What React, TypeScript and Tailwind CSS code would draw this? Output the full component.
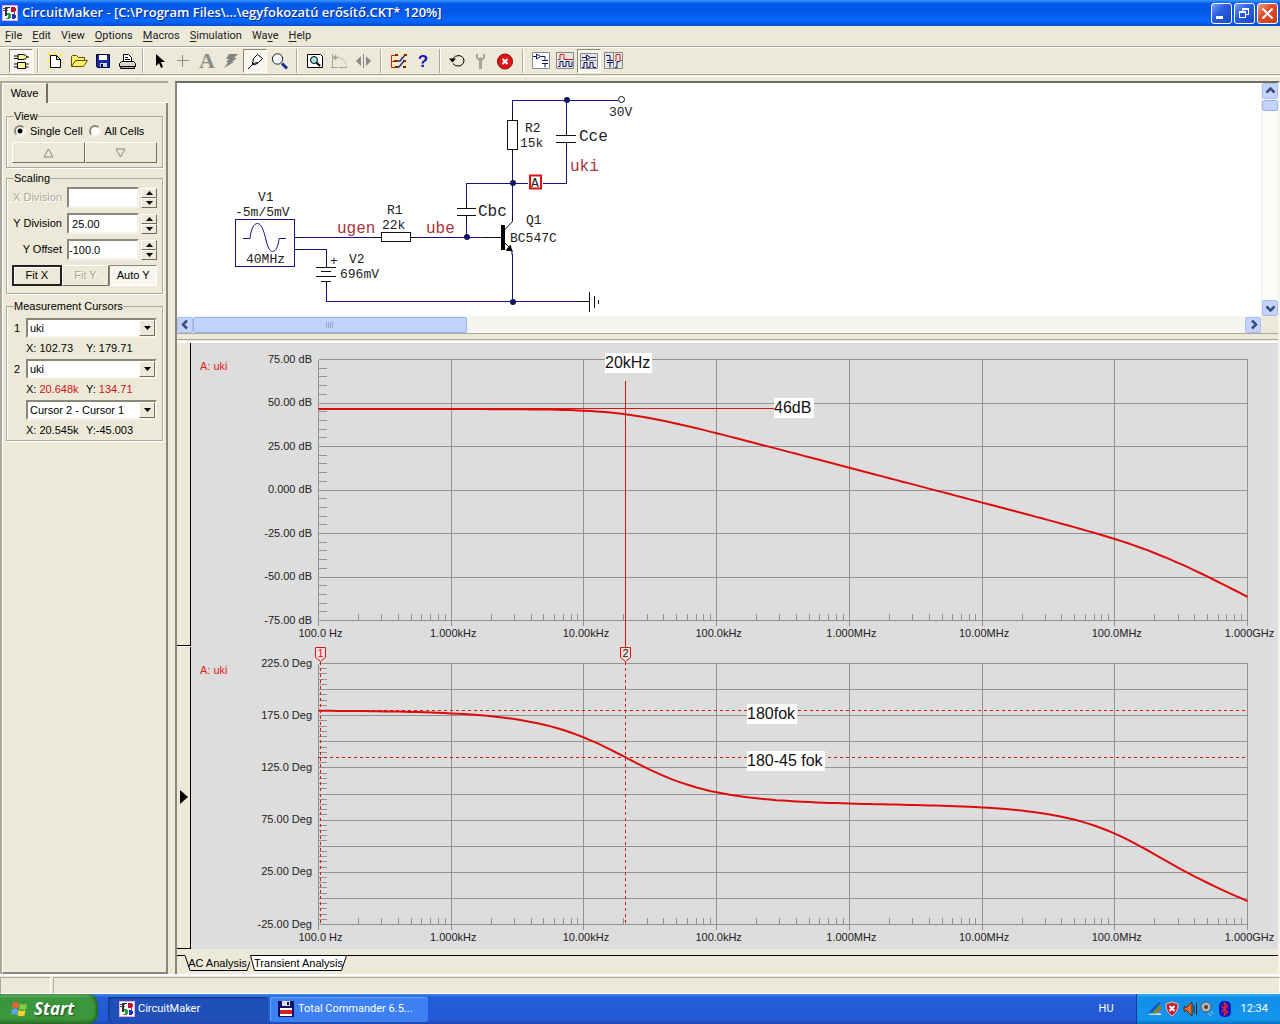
import { useState } from 'react'
import type { ReactNode } from 'react'
import clsx from 'clsx'

const raised = 'bg-[#ece9d8] border border-t-white border-l-white border-r-[#716f64] border-b-[#716f64]'
const sunken = 'bg-white border-2 border-t-[#8a8778] border-l-[#8a8778] border-r-[#f6f4ea] border-b-[#f6f4ea]'
const dither = 'bg-[#f6f5ee] border border-t-[#8a8778] border-l-[#8a8778] border-r-white border-b-white'

/* ---------- icons ---------- */

function AppIcon() {
  return (
    <svg viewBox="0 0 16 16" className="h-4 w-4 shrink-0" shapeRendering="crispEdges" aria-hidden="true">
      <rect width="16" height="16" fill="#f0a8ec" />
      <rect x="1" y="1" width="14" height="14" fill="#fff" />
      <path d="M1 3h5M1 5h5M4 8h3M12 7v3" stroke="#555" fill="none" />
      <path d="M3 2h5v1H5v8H3z" fill="#333" />
      <path d="M9 2h4v1h1v3h-1v1H9z" fill="#c01030" />
      <path d="M5 8h3v1h1v4H8v1H4v-1h2v-3H5z" fill="#2a9a4a" />
      <path d="M10 9h3v1h1v3h-1v1h-3z" fill="#2030b0" />
    </svg>
  )
}

const toolIcons: Record<string, ReactNode> = {
  Parts: (
    <g stroke="#000" fill="#fff59a">
      <path d="M9 5.500h5q3 0 4 2.500q-1 2.500-4 2.500H9zM5 7h4M5 9.500h4M18 8h2" />
      <path d="M8.500 13.500h8v6h-8zM5 15h3.500M5 18h3.500M16.500 15h3M16.500 18h3" />
    </g>
  ),
  New: (
    <g>
      <path d="M5 4l3 3M19 5l-2 3M4 12h4M19 15l-3-2M6 20l2-3M12 3v4" stroke="#ffee30" strokeWidth="2" />
      <path d="M7.500 6.500h6l4 4v8h-10zM13.500 6.500v4h4" fill="#fff" stroke="#000" />
    </g>
  ),
  Open: (
    <g stroke="#5a5200" fill="#fff06a">
      <path d="M4.500 17.500v-10l1-1h4l2 2h6v3" />
      <path d="M4.500 17.500l4-6h12l-4 6z" />
    </g>
  ),
  Save: (
    <g>
      <path d="M5.500 5.500h13v13h-12l-1-1z" fill="#1a2aa0" stroke="#000040" />
      <path d="M8 6h8v5H8z" fill="#fff" />
      <path d="M9 14h7v4H9z" fill="#c8d4f0" />
      <path d="M10 15h2v3h-2z" fill="#000040" />
    </g>
  ),
  Print: (
    <g stroke="#000" fill="#fff">
      <path d="M8.500 12.500v-7h5l3 3v4z" />
      <path d="M10 8.500h3M10 10.500h5" />
      <path d="M6.500 12.500h12l2 2v3h-16v-3z" fill="#d8d8c8" />
      <path d="M5.500 17.500h14v2h-14z" fill="#aaa" />
    </g>
  ),
  Select: <path d="M9 5v12l3-3 2 5 2-1-2-5h4z" fill="#000" />,
  Wire: <path d="M11.500 6v12M6 11.500h12" stroke="#8c8c86" fill="none" />,
  Text: (
    <text x="12" y="19" textAnchor="middle" fontSize="22" fontWeight="bold" fill="#8c8c86" className="font-['Liberation_Serif',serif]">A</text>
  ),
  Delete: <path d="M10 5h9l-4 4h3l-5 4h2l-10 6 4-6H7l3-3H7z" fill="#85857f" />,
  Probe: (
    <g stroke="#000" fill="#fff">
      <path d="M5 20l5-5" />
      <path d="M9.500 14.500l1-5 4-4 5 4-4 4z" />
      <path d="M9 14l2 2 4-2" fill="none" />
    </g>
  ),
  Zoom: (
    <g>
      <circle cx="10.500" cy="10" r="5.200" fill="#f4fbff" stroke="#222" />
      <path d="M15 14.500l5 5" stroke="#1a2a9a" strokeWidth="3" />
    </g>
  ),
  Fit: (
    <g stroke="#000" fill="none">
      <path d="M4.500 5.500h13l2 2v11h-15z" fill="#fff" />
      <circle cx="11" cy="11" r="3.500" fill="#9fe0e0" />
      <path d="M13.500 13.500l3.500 3.500" strokeWidth="2" />
    </g>
  ),
  Rotate: (
    <g stroke="#a5a59d" fill="none">
      <path d="M5.500 5v13M4 18.500h7M5.500 8.500h6M12 18.500h8" />
      <path d="M11 8.500q7 1 8.500 9" strokeDasharray="2 1" />
      <path d="M9 6l-3 2.500 3 2.500z" fill="#a5a59d" />
    </g>
  ),
  Mirror: (
    <g fill="#8c8c86">
      <path d="M10 7v10l-5-5zM15 7v10l5-5z" />
      <path d="M12 5h1v14h-1z" />
    </g>
  ),
  Trace: (
    <g>
      <path d="M4 4h16v16H4z" fill="#fff27a" opacity="0.300" />
      <path d="M9 6.500H4.500v12H9M4.500 12.500h3" stroke="#c02020" fill="none" />
      <path d="M10 12h3l5-6M9 18h3l5-6" stroke="#1a2ab0" strokeWidth="1.500" fill="none" />
      <path d="M8 5h3v2H8zM17 5h3v2h-3zM7 11h3v2H7zM16 11h3v2h-3zM8 17h3v2H8zM16 17h3v2h-3z" fill="#8a1818" />
    </g>
  ),
  Help: (
    <text x="12" y="18" textAnchor="middle" fontSize="17" fontWeight="bold" fill="#1414b8" className="font-['Liberation_Sans',sans-serif]">?</text>
  ),
  Reset: (
    <g>
      <path d="M8 9.500q2-3 6-3 5 1 5 5.500-1 5-6 5-3 0-5-2.500" stroke="#000" fill="none" />
      <path d="M4 9.500h7l-3.500 4z" fill="#000" />
    </g>
  ),
  Step: <path d="M7 5v4l3 3v8h3v-8l3-3V5h-2v4h-1.500l-.500-1h-1l-.500 1H9V5z" fill="#a5a59d" />,
  Stop: (
    <g>
      <circle cx="12" cy="12.500" r="7.500" fill="#e01414" stroke="#8a0000" />
      <path d="M9.500 10l5 5M14.500 10l-5 5" stroke="#fff" strokeWidth="2" />
    </g>
  ),
  Schematic: (
    <g>
      <path d="M3.500 3.500h17v16h-17z" fill="#fff" stroke="#888" />
      <path d="M4 7.500h3M12 7.500h4v4M7.500 5v5l4-2.500zM13 11.500h6M13 14.500h6M16 14.500v4" stroke="#12126a" fill="none" />
    </g>
  ),
  Waveforms: (
    <g fill="none">
      <path d="M3.500 3.500h17v16h-17z" fill="#e6e6e0" stroke="#888" />
      <path d="M5 10.500h2v-5h4v5h9" stroke="#d02020" />
      <path d="M5 17.500h2v-5h3v5h3v-5h3v5h3v-5" stroke="#12126a" />
    </g>
  ),
  'Split horizontally': (
    <g fill="none">
      <path d="M3.500 4.500h17v15h-17z" fill="#e6e6e0" stroke="#888" />
      <path d="M4 11.500h16" stroke="#888" />
      <path d="M5 8.500h4M9.500 6v5l4-2.500zM14 8.500h5M5 18.500h2v-5h3v5h3v-5h3v5h3" stroke="#12126a" />
    </g>
  ),
  'Split vertically': (
    <g fill="none">
      <path d="M3.500 3.500h18v16h-18z" fill="#e6e6e0" stroke="#888" />
      <path d="M12.500 4v15" stroke="#888" />
      <path d="M5 6.500h4v5M6 11.500h6M6 13.500h6M9 13.500v5M14 18.500h2v-6h3" stroke="#12126a" />
      <path d="M14 11.500h1v-6h4v6h2" stroke="#d02020" />
    </g>
  ),
}

const toolGroups = [
  { pad: 'w-[10px]', tools: ['Parts'] },
  { pad: 'w-2', tools: ['New', 'Open', 'Save', 'Print'] },
  { pad: 'w-3', tools: ['Select', 'Wire', 'Text', 'Delete', 'Probe', 'Zoom'] },
  { pad: 'w-3', tools: ['Fit', 'Rotate', 'Mirror'] },
  { pad: 'w-[10px]', tools: ['Trace', 'Help'] },
  { pad: 'w-3', tools: ['Reset', 'Step', 'Stop'] },
  { pad: '', tools: ['Schematic', 'Waveforms', 'Split horizontally', 'Split vertically'] },
]

const pressed = ['Parts', 'Probe', 'Split horizontally']

/* ---------- window chrome ---------- */

function TitleBar() {
  const base = 'flex h-[21px] w-[21px] items-center justify-center rounded-[3px] border border-white'
  const blue = 'bg-[linear-gradient(135deg,#7aa2f5,#2a5fe0_40%,#1c49c4)]'
  return (
    <header className="flex h-[26px] items-center bg-[linear-gradient(#3a95ff,#0458e8_15%,#0458e8_45%,#0668ff_80%,#0450d0)] pr-0.5 pl-0.5">
      <AppIcon />
      <h1 className="flex-1 pl-1 font-['Open_Sans','Noto_Sans',sans-serif] text-[13px] font-semibold whitespace-nowrap text-white [text-shadow:1px_1px_#0a2a80]">
        CircuitMaker - [C:\Program Files\...\egyfokozatú erősítő.CKT* 120%]
      </h1>
      <div className="flex gap-0.5">
        <button className={clsx(base, blue)} aria-label="Minimize">
          <svg viewBox="0 0 19 19" className="h-[19px] w-[19px]"><path d="M4 12h7v3H4z" fill="#fff" /></svg>
        </button>
        <button className={clsx(base, blue)} aria-label="Restore">
          <svg viewBox="0 0 19 19" className="h-[19px] w-[19px]" fill="none" stroke="#fff" shapeRendering="crispEdges">
            <path d="M4.500 8.500h6v5h-6zM4 7.500h7M7.500 7V4.500h6v6H11M7 5.500h7" />
          </svg>
        </button>
        <button className={clsx(base, 'bg-[linear-gradient(135deg,#f0a088,#e05030_40%,#c83c14)]')} aria-label="Close">
          <svg viewBox="0 0 19 19" className="h-[19px] w-[19px]"><path d="M4.500 4.500l10 10M14.500 4.500l-10 10" stroke="#fff" strokeWidth="2" /></svg>
        </button>
      </div>
    </header>
  )
}

const menus: [string, string, string][] = [
  ['', 'F', 'ile'],
  ['', 'E', 'dit'],
  ['V', 'i', 'ew'],
  ['', 'O', 'ptions'],
  ['', 'M', 'acros'],
  ['', 'S', 'imulation'],
  ['Wa', 'v', 'e'],
  ['', 'H', 'elp'],
]

function MenuBar() {
  return (
    <nav className="flex h-[21px] items-center gap-2.5 border-b border-[#aca899] pl-[5px] font-['Roboto',sans-serif] text-[11px] text-[#222]">
      {menus.map(([before, key, after]) => (
        <button key={before + key + after} className="leading-4">
          {before}
          <span className="underline underline-offset-2">{key}</span>
          {after}
        </button>
      ))}
    </nav>
  )
}

function Toolbar() {
  return (
    <div className="flex h-7 items-center border-t border-b border-t-white border-b-[#aca899] pl-[9px]" role="toolbar">
      {toolGroups.map((group) => (
        <div key={group.tools[0]} className="flex items-center">
          {group.tools.map((tool) => (
            <button
              key={tool}
              aria-label={tool}
              className={clsx('flex h-6 w-6 items-center justify-center', pressed.includes(tool) && dither)}
            >
              <svg viewBox="0 0 24 24" className="h-6 w-6 shrink-0" fill="none">{toolIcons[tool]}</svg>
            </button>
          ))}
          {group.pad && (
            <div className={clsx('flex justify-center', group.pad)}>
              <div className="h-6 w-0.5 border-r border-l border-r-white border-l-[#aca899]" />
            </div>
          )}
        </div>
      ))}
    </div>
  )
}

/* ---------- side panel ---------- */

function Group({ title, className, children }: { title: string; className?: string; children: ReactNode }) {
  return (
    <fieldset className={clsx('border border-[#aca899] px-[5px] shadow-[inset_1px_0_white,1px_1px_white]', className)}>
      <legend className="ml-0.5 leading-[14px]">{title}</legend>
      {children}
    </fieldset>
  )
}

function NumberField({ label, value, disabled }: { label: string; value: string; disabled?: boolean }) {
  const [text, setText] = useState(value)
  const id = label.replace(' ', '-').toLowerCase()
  return (
    <div className="flex h-[21px] items-center">
      <label htmlFor={id} className={clsx('flex-1 pr-[5px] text-right whitespace-nowrap', disabled && 'text-[#aca899] [text-shadow:1px_1px_white]')}>
        {label}
      </label>
      <input id={id} value={text} disabled={disabled} onChange={(e) => setText(e.target.value)} className={clsx('h-[21px] w-[72px]', sunken)} />
      <div className="ml-0.5 flex h-5 w-4 flex-col">
        {['up', 'down'].map((dir) => (
          <button key={dir} aria-label={`${label} ${dir}`} className={clsx('flex flex-1 items-center justify-center', raised)}>
            <svg viewBox="0 0 7 4" className="h-1 w-[7px]">
              <path d={dir === 'up' ? 'M0 4l3.500-4L7 4z' : 'M0 0h7L3.500 4z'} />
            </svg>
          </button>
        ))}
      </div>
    </div>
  )
}

function Combo({ label, options }: { label: string; options: string[] }) {
  return (
    <div className="relative flex-1">
      <select aria-label={label} className={clsx('block h-5 w-full appearance-none pl-0.5', sunken)}>
        {options.map((o) => (
          <option key={o}>{o}</option>
        ))}
      </select>
      <span className={clsx('pointer-events-none absolute top-0.5 right-0.5 flex h-4 w-4 items-center justify-center', raised)}>
        <svg viewBox="0 0 7 4" className="h-1 w-[7px]"><path d="M0 0h7L3.500 4z" /></svg>
      </span>
    </div>
  )
}

function Readout({ x, y, red }: { x: string; y: string; red?: boolean }) {
  return (
    <p className="flex h-[21px] items-center pl-3.5 whitespace-pre">
      <span className="w-[60px]">X: <span className={clsx(red && 'text-[#d01010]')}>{x}</span></span>
      <span>Y:<span className={clsx(red && 'text-[#d01010]')}>{y}</span></span>
    </p>
  )
}

function Radio({ label, defaultChecked }: { label: string; defaultChecked?: boolean }) {
  return (
    <label className="flex items-center gap-1 whitespace-nowrap">
      <input
        type="radio"
        name="cells"
        defaultChecked={defaultChecked}
        className="h-3 w-3 appearance-none rounded-full border-2 border-t-[#8a8778] border-r-[#f6f4ea] border-b-[#f6f4ea] border-l-[#8a8778] bg-white checked:bg-[radial-gradient(circle,#000_2px,#fff_3px)]"
      />
      {label}
    </label>
  )
}

function SidePanel() {
  return (
    <aside className="flex w-[168px] shrink-0 flex-col border-t-2 border-t-[#aca899] border-l-2 border-l-[#aca899] font-['Liberation_Sans',sans-serif] text-[11px]">
      <div className="flex">
        <button className="h-5 w-[46px] border-t border-r-2 border-l border-t-white border-r-[#716f64] border-l-white">Wave</button>
        <div className="flex-1 border-b border-white" />
      </div>
      <div className="flex-1 border-r-2 border-b-2 border-l border-r-[#8a8778] border-b-[#8a8778] border-l-white px-[3px] pt-1.5">
        <Group title="View" className="h-[59px]">
          <div className="flex h-4 items-center gap-1.5 pl-0.5">
            <Radio label="Single Cell" defaultChecked />
            <Radio label="All Cells" />
          </div>
          <div className="mt-[3px] flex h-[21px]">
            {['Previous cell', 'Next cell'].map((name, i) => (
              <button key={name} aria-label={name} className={clsx('flex flex-1 items-center justify-center', raised)}>
                <svg viewBox="0 0 11 10" className="h-2.5 w-[11px]" fill="none" stroke="#8a8778">
                  <path d={i === 0 ? 'M1 9h9L5.500 1z' : 'M1 1h9L5.500 9z'} />
                </svg>
              </button>
            ))}
          </div>
        </Group>

        <Group title="Scaling" className="mt-[3px] h-[123px]">
          <div className="mt-0.5 flex flex-col gap-[5px]">
            <NumberField label="X Division" value="" disabled />
            <NumberField label="Y Division" value=" 25.00" />
            <NumberField label="Y Offset" value="-100.0" />
          </div>
          <div className="mt-[5px] flex h-[21px]">
            <button className="flex-1 border-2 border-[#222] bg-[#ece9d8] shadow-[inset_1px_1px_white]">Fit X</button>
            <button disabled className={clsx('flex-1 text-[#aca899] [text-shadow:1px_1px_white]', raised)}>Fit Y</button>
            <button className={clsx('flex-1', dither)}>Auto Y</button>
          </div>
        </Group>

        <Group title="Measurement Cursors" className="mt-[5px] h-[142px]">
          <div className="mt-[5px] flex items-center">
            <span className="w-3.5 pl-0.5">1</span>
            <Combo label="Cursor 1 wave" options={['uki', 'ube', 'ugen']} />
          </div>
          <Readout x="102.73" y=" 179.71" />
          <div className="flex items-center">
            <span className="w-3.5 pl-0.5">2</span>
            <Combo label="Cursor 2 wave" options={['uki', 'ube', 'ugen']} />
          </div>
          <Readout x="20.648k" y=" 134.71" red />
          <div className="flex items-center pl-3.5">
            <Combo label="Difference" options={['Cursor 2 - Cursor 1', 'Cursor 1 - Cursor 2']} />
          </div>
          <Readout x="20.545k" y="-45.003" />
        </Group>
      </div>
    </aside>
  )
}

/* ---------- schematic ---------- */

function Schematic() {
  return (
    <svg viewBox="177 83 480 233" className="h-[233px] w-[480px] shrink-0" role="img" aria-label="Schematic">
      <g stroke="#14148c" fill="none" shapeRendering="crispEdges">
        <path d="M512.500 112v-11.500h105M566.500 100v30M566.500 146v37.500h-24M528 183.500h-61.500v20M512.500 158v58M466.500 219v18" />
        <path d="M302 237.500h76M414 237.500h70M302 249.500h24.500v9.500M326.500 288v13.500h250M512.500 254v48" />
        <path d="M235.500 219.500h59v47h-59z" />
      </g>
      <path d="M243 238.500h7c1-10 4-15 7.500-15s6 6 8 14.500 4 13.500 7 13.500 6-5 6.500-13h7" stroke="#14148c" fill="none" />
      <g stroke="#111" fill="none" shapeRendering="crispEdges">
        <path d="M512.500 112v8M507.500 120.500h10v29h-10zM512.500 150v8M556 135.500h20M556 142.500h20M566.500 130v5M566.500 143v4" />
        <path d="M457 208.500h19M457 215.500h19M466.500 203v5M466.500 216v4M295 237.500h7M295 249.500h7" />
        <path d="M373 237.500h8M381.500 232.500h29v9h-29zM411 237.500h5M484 237.500h17" />
        <path d="M326.500 259v8M316 267.500h20M321 271.500h10M316 276.500h20M321 281.500h10M326.500 282v6" />
        <path d="M576 301.500h13M589.500 292v20M594.500 296v12M598.500 300v4" />
      </g>
      <path d="M504 230.500l8.500-9v-6M504 242l8 8v5" stroke="#111" fill="none" />
      <path d="M501 225h4v25h-4zM512.500 251.500l-7-1 5-6z" fill="#000" />
      <circle cx="621.500" cy="99.500" r="3" fill="#fff" stroke="#111" />
      <g fill="#14145c">
        <circle cx="567" cy="100" r="3" />
        <circle cx="513" cy="183" r="3" />
        <circle cx="467" cy="237" r="3" />
        <circle cx="513" cy="302" r="3" />
      </g>
      <path d="M530 175.500h11v13h-11z" fill="#fff" stroke="#e01010" strokeWidth="2" />
      <g className="font-['Liberation_Mono',monospace]" fontSize="13" fill="#222">
        <text x="531" y="187">A</text>
        <text x="258" y="201">V1</text>
        <text x="235" y="216">-5m/5mV</text>
        <text x="246" y="263">40MHz</text>
        <text x="387" y="214">R1</text>
        <text x="382" y="229">22k</text>
        <text x="330" y="265">+</text>
        <text x="349" y="263">V2</text>
        <text x="340" y="278">696mV</text>
        <text x="525" y="132">R2</text>
        <text x="520" y="147">15k</text>
        <text x="609" y="116">30V</text>
        <text x="526" y="224">Q1</text>
        <text x="510" y="242">BC547C</text>
      </g>
      <g className="font-['Liberation_Mono',monospace]" fontSize="16" fill="#222">
        <text x="579" y="141">Cce</text>
        <text x="478" y="216">Cbc</text>
        <g fill="#a83238">
          <text x="337" y="233">ugen</text>
          <text x="426" y="233">ube</text>
          <text x="570" y="171">uki</text>
        </g>
      </g>
    </svg>
  )
}

function ScrollButton({ dir }: { dir: 'up' | 'down' | 'left' | 'right' }) {
  const paths = {
    up: 'M3.500 8.500l4-4 4 4',
    down: 'M3.500 5.500l4 4 4-4',
    left: 'M9 3.500l-4 4 4 4',
    right: 'M6 3.500l4 4-4 4',
  }
  return (
    <button aria-label={`Scroll ${dir}`} className="flex h-4 w-4 shrink-0 items-center justify-center rounded-[2px] border border-[#a8bdf0] bg-[#c3d3fd]">
      <svg viewBox="0 0 15 15" className="h-[15px] w-[15px] shrink-0" fill="none" stroke="#35507c" strokeWidth="2.500">
        <path d={paths[dir]} />
      </svg>
    </button>
  )
}

function SchematicPane() {
  return (
    <section className="flex">
      <div className="flex min-w-0 flex-1 flex-col">
        <div className="flex overflow-hidden bg-white">
          <Schematic />
        </div>
        <div className="flex h-[17px] items-center bg-[#f5f4ee]">
          <ScrollButton dir="left" />
          <div className="min-w-0 flex-1">
            <div className="flex h-4 w-[26%] items-center justify-center gap-px rounded-[2px] border border-[#9ab2ea] bg-[#c2d4fd]">
              {[0, 1, 2, 3].map((i) => (
                <i key={i} className="h-1.5 w-px border-r border-[#8ba4dc] bg-white" />
              ))}
            </div>
          </div>
          <ScrollButton dir="right" />
        </div>
      </div>
      <div className="flex w-[17px] flex-col items-center border-l border-[#eeede5] bg-[#fbfbf8]">
        <ScrollButton dir="up" />
        <div className="w-4 flex-1">
          <div className="mt-px h-[11px] rounded-[2px] border border-[#9ab2ea] bg-[#c2d4fd]" />
        </div>
        <ScrollButton dir="down" />
        <div className="h-[17px] w-full bg-[#ece9d8]" />
      </div>
    </section>
  )
}

/* ---------- plots ---------- */

const X0 = 318.5
const X1 = 1247.5
const DECADE = (X1 - X0) / 7
const POLE_LOW = 20648
const POLE_HIGH = 200e6

const freqX = (f: number) => X0 + (Math.log10(f) - 2) * DECADE
const gainY = (db: number) => 359.5 + ((75 - db) / 150) * 261
const phaseY = (deg: number) => 663.5 + ((225 - deg) / 250) * 261

const gain = (f: number) =>
  46.5 - 10 * Math.log10(1 + (f / POLE_LOW) ** 2) - 10 * Math.log10(1 + (f / POLE_HIGH) ** 2)
const phase = (f: number) =>
  180 - ((Math.atan(f / POLE_LOW) + Math.atan(f / POLE_HIGH)) * 180) / Math.PI - 14 * (f / 1e9)

const sweep = Array.from({ length: 141 }, (_, i) => 10 ** (2 + i / 20))
const trace = (y: (f: number) => number) => sweep.map((f) => `${freqX(f).toFixed(1)},${y(f).toFixed(1)}`).join(' ')

const freqLabels = ['100.0 Hz', '1.000kHz', '10.00kHz', '100.0kHz', '1.000MHz', '10.00MHz', '100.0MHz', '1.000GHz']
const gainLabels = ['75.00 dB', '50.00 dB', '25.00 dB', '0.000 dB', '-25.00 dB', '-50.00 dB', '-75.00 dB']
const phaseLabels = ['225.0 Deg', '175.0 Deg', '125.0 Deg', '75.00 Deg', '25.00 Deg', '-25.00 Deg']

function Grid({ top, rows, ticks, labels }: { top: number; rows: number; ticks: number; labels: string[] }) {
  const bottom = top + 261
  let d = ''
  for (let i = 0; i <= rows; i++) d += `M${X0} ${top + (i * 261) / rows}H${X1}`
  for (let i = 0; i < ticks; i++) d += `M${X0} ${top + (i * 261) / ticks}h8`
  for (let i = 0; i <= 7; i++) {
    d += `M${X0 + i * DECADE} ${top}V${bottom + 5}`
    if (i === 7) continue
    for (let n = 2; n < 10; n++) d += `M${X0 + (i + Math.log10(n)) * DECADE} ${bottom - 7}v7`
  }
  return (
    <g>
      <path d={d} stroke="#929292" fill="none" shapeRendering="crispEdges" />
      <g fontSize="11" fill="#222">
        {labels.map((label, i) => (
          <text key={label} x="312" y={top + 3 + (i * 261) / (labels.length - 1)} textAnchor="end">{label}</text>
        ))}
        {freqLabels.map((label, i) => (
          <text key={label} x={X0 + 2 + i * DECADE} y={bottom + 16} textAnchor="middle">{label}</text>
        ))}
      </g>
      <text x="200" y={top + 10} fontSize="11" fill="#e02020">A: uki</text>
    </g>
  )
}

function Note({ x, y, w, children }: { x: number; y: number; w: number; children: string }) {
  return (
    <g>
      <rect x={x} y={y} width={w} height="20" fill="#fff" />
      <text x={x} y={y + 15} fontSize="16" fill="#111">{children}</text>
    </g>
  )
}

function Flag({ x, color, children }: { x: number; color: string; children: string }) {
  return (
    <g>
      <path d={`M${x - 5} 647.500h10v10l-5 4-5-4z`} fill="#f3dede" stroke="#d81414" />
      <text x={x} y="657" fontSize="11" textAnchor="middle" fill={color}>{children}</text>
    </g>
  )
}

function Plots() {
  return (
    <svg viewBox="191 343 1087 606" className="block h-auto min-w-0 flex-1 bg-[#dddddd] font-['Liberation_Sans',sans-serif]" role="img" aria-label="AC analysis">
      <Grid top={359.5} rows={6} ticks={30} labels={gainLabels} />
      <Grid top={663.5} rows={10} ticks={50} labels={phaseLabels} />
      <g fill="#d81414" shapeRendering="crispEdges">
        <rect x="318" y="408" width="456" height="1" />
        <rect x="625" y="381" width="1" height="267" />
      </g>
      <g stroke="#d81414" fill="none" shapeRendering="crispEdges" strokeDasharray="3 3">
        <path d="M318 710.500h930" />
        <path d="M318 757.500h930" />
        <path d="M320.500 662v263" />
        <path d="M625.500 662v263" />
      </g>
      <g stroke="#dc0c0c" strokeWidth="2" fill="none">
        <polyline points={trace((f) => gainY(gain(f)))} />
        <polyline points={trace((f) => phaseY(phase(f)))} />
      </g>
      <Flag x={320.5} color="#d81414">1</Flag>
      <Flag x={625.5} color="#222">2</Flag>
      <Note x={605} y={353} w={47}>20kHz</Note>
      <Note x={774} y={398} w={40}>46dB</Note>
      <Note x={747} y={704} w={50}>180fok</Note>
      <Note x={747} y={751} w={78}>180-45 fok</Note>
    </svg>
  )
}

function WavePane() {
  return (
    <section className="flex">
      <div className="flex w-3.5 shrink-0 flex-col gap-px bg-white">
        <button aria-label="Gain cell" className="flex-1 border-r border-b border-black bg-[#ece9d8]" />
        <button aria-label="Phase cell" className="flex flex-1 items-center justify-center border-r border-b border-black bg-[#ece9d8]">
          <svg viewBox="0 0 8 14" className="h-3.5 w-2"><path d="M0 0l8 7-8 7z" /></svg>
        </button>
      </div>
      <Plots />
    </section>
  )
}

function AnalysisTabs() {
  return (
    <div className="mt-1.5 flex h-[19px] items-start font-['Liberation_Sans',sans-serif] text-[11px]" role="tablist">
      <div className="w-2 border-t border-black" />
      <button role="tab" aria-selected="true" className="relative h-4 w-[65px] leading-4 whitespace-nowrap">
        <svg viewBox="0 0 65 16" className="absolute inset-0 h-4 w-[65px]" fill="none" stroke="#000">
          <path d="M0 0.500l5 15h57l3-9" />
        </svg>
        <span className="relative">AC Analysis</span>
      </button>
      <button role="tab" aria-selected="false" className="relative h-4 w-[97px] leading-4 whitespace-nowrap">
        <svg viewBox="0 0 97 16" className="absolute inset-0 h-4 w-[97px]" stroke="#000">
          <path d="M0.500 0.500l4 15h87l5-15z" fill="#fff" />
        </svg>
        <span className="relative">Transient Analysis</span>
      </button>
      <div className="flex-1 border-t border-black" />
    </div>
  )
}

/* ---------- taskbar ---------- */

function TrayIcons() {
  return (
    <svg viewBox="0 0 86 18" className="h-[18px] w-[86px]" aria-hidden="true">
      <path d="M1 14l12-1 2 2H3z" fill="#ddd" />
      <path d="M2 12L12 2l2 1-8 10z" fill="#2848c8" />
      <path d="M5 13l8-9 1 2-6 8z" fill="#30b040" />
      <path d="M8 13l6-7v3l-4 4z" fill="#e85020" />
      <path d="M19 4l6-2 6 2c0 6-2 9-6 12-4-3-6-6-6-12z" fill="#c81c2c" stroke="#f0c0c8" />
      <path d="M22.500 6l5 5M27.500 6l-5 5" stroke="#fff" strokeWidth="2" />
      <path d="M37 7h3l5-5v14l-5-5h-3z" fill="#e07030" stroke="#502010" />
      <path d="M47 5v8M49.500 3v12" stroke="#222" />
      <circle cx="59" cy="7" r="5" fill="#b8b8b8" stroke="#555" />
      <circle cx="59" cy="7" r="2" fill="#444" />
      <path d="M61 13l3 3M64 11l2 3" stroke="#9cc4ff" />
      <rect x="72" y="1" width="12" height="16" rx="5" fill="#1018c0" />
      <path d="M74.500 6l6 6-3 3V3l3 3-6 6" stroke="#e02030" strokeWidth="1.500" fill="none" />
    </svg>
  )
}

function Taskbar() {
  return (
    <footer className="flex h-[30px] items-stretch bg-[linear-gradient(#3f86f0,#245edb_12%,#2358d6_85%,#1c48b0)] font-['Roboto',sans-serif] text-[11px] text-white">
      <button className="flex w-[98px] items-center gap-1.5 rounded-r-[10px] bg-[linear-gradient(#6cb86c,#3a963a_15%,#3c983c_80%,#2a742a)] pl-2.5 shadow-[inset_-2px_0_3px_#1f5f1f]">
        <svg viewBox="0 0 18 18" className="h-[18px] w-[18px]">
          <path d="M3 3q3-2 6 0L8 8.500q-3-2-6 0z" fill="#f06030" />
          <path d="M10 3.500q3 2 7 0L16 9q-3 1.500-7 0z" fill="#80d040" />
          <path d="M2 9.500q3-2 6 0L7 15q-3-2-6 0z" fill="#60a0f8" />
          <path d="M8.500 10q3 2 7 0l-1 5.500q-3 1.500-7 0z" fill="#f8d030" />
        </svg>
        <span className="font-['Open_Sans',sans-serif] text-[17px] font-bold italic [text-shadow:1px_1px_2px_#1a4a1a]">Start</span>
      </button>
      <div className="flex min-w-0 flex-1 items-center gap-0.5 pl-2.5">
        <button className="flex h-[25px] w-[160px] items-center gap-[3px] rounded-[3px] bg-[#1e50b8] pl-[11px] shadow-[inset_1px_1px_2px_#12347c]">
          <AppIcon />
          CircuitMaker
        </button>
        <button className="flex h-[25px] w-[158px] items-center gap-1 rounded-[3px] bg-[#3c80f2] pl-2 shadow-[inset_1px_1px_1px_#6ca4ff]">
          <svg viewBox="0 0 16 16" className="h-4 w-4 shrink-0">
            <path d="M0 0h16v16H1l-1-1z" fill="#10106a" />
            <path d="M4 0h8v5H4z" fill="#ddd" />
            <path d="M9 1h2v3H9z" fill="#10106a" />
            <path d="M2 7h12v8H2z" fill="#fff" />
            <path d="M2 9h12v4H2z" fill="#d02020" />
          </svg>
          Total Commander 6.5...
        </button>
      </div>
      <div className="flex items-center pr-[22px]">HU</div>
      <div className="flex items-center gap-2 border-l border-[#0c3c9c] bg-[linear-gradient(#30b0f8,#1290e8_12%,#1494ec_85%,#0c70c0)] pr-3 pl-2.5">
        <TrayIcons />
        <time>12:34</time>
      </div>
    </footer>
  )
}

export default function App() {
  return (
    <div className="flex min-h-screen flex-col bg-[#ece9d8] text-black">
      <TitleBar />
      <MenuBar />
      <Toolbar />
      <main className="mt-px flex flex-1 gap-[7px] border-t border-white pt-1">
        <SidePanel />
        <div className="flex min-w-0 flex-1 flex-col border-t-2 border-r-2 border-l-2 border-t-[#716f64] border-r-[#f6f4ea] border-l-[#8a8778]">
          <SchematicPane />
          <div className="flex h-2.5 flex-col border-t border-b-2 border-t-[#aca899] border-b-white">
            <div className="mt-[5px] h-px bg-[#aca899]" />
          </div>
          <WavePane />
          <AnalysisTabs />
        </div>
      </main>
      <div className="flex h-5 gap-0.5 border-t-2 border-white pt-px">
        <div className="w-[51px] border border-t-[#aca899] border-r-white border-b-white border-l-[#aca899]" />
        <div className="flex-1 border border-t-[#aca899] border-r-white border-b-white border-l-[#aca899]" />
      </div>
      <Taskbar />
    </div>
  )
}
